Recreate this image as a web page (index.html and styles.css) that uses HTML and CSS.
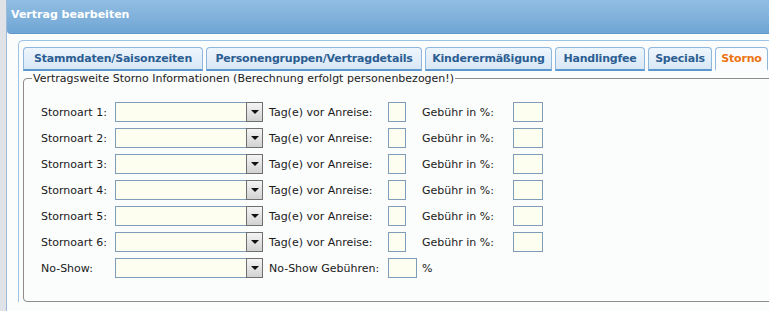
FILE: index.html
```html
<!DOCTYPE html>
<html lang="de">
<head>
    <meta charset="UTF-8">
    <meta name="viewport" content="width=device-width, initial-scale=1.0">
    <title>Vertrag bearbeiten</title>
    <link rel="stylesheet" href="styles.css">
</head>
<body>
    <div class="fenster">
        <div class="kopf">Vertrag bearbeiten</div>

        <div class="inhalt">
            <div class="panel">
                <ul class="reiter">
                    <li class="r-stamm">Stammdaten/Saisonzeiten</li>
                    <li class="r-pers">Personengruppen/Vertragdetails</li>
                    <li class="r-kind">Kinderermäßigung</li>
                    <li class="r-hand">Handlingfee</li>
                    <li class="r-spec">Specials</li>
                    <li class="r-storno aktiv">Storno</li>
                </ul>

                <fieldset class="storno">
                    <legend>Vertragsweite Storno Informationen (Berechnung erfolgt personenbezogen!)</legend>

                    <div class="zeilen">
                        <div class="zeile">
                            <label class="lbl">Stornoart 1:</label>
                            <div class="auswahl"><span class="pfeil"></span></div>
                            <span class="tage">Tag(e) vor Anreise:</span>
                            <input class="feld klein" type="text">
                            <span class="gebuehr">Gebühr in %:</span>
                            <input class="feld mittel" type="text">
                        </div>
                        <div class="zeile">
                            <label class="lbl">Stornoart 2:</label>
                            <div class="auswahl"><span class="pfeil"></span></div>
                            <span class="tage">Tag(e) vor Anreise:</span>
                            <input class="feld klein" type="text">
                            <span class="gebuehr">Gebühr in %:</span>
                            <input class="feld mittel" type="text">
                        </div>
                        <div class="zeile">
                            <label class="lbl">Stornoart 3:</label>
                            <div class="auswahl"><span class="pfeil"></span></div>
                            <span class="tage">Tag(e) vor Anreise:</span>
                            <input class="feld klein" type="text">
                            <span class="gebuehr">Gebühr in %:</span>
                            <input class="feld mittel" type="text">
                        </div>
                        <div class="zeile">
                            <label class="lbl">Stornoart 4:</label>
                            <div class="auswahl"><span class="pfeil"></span></div>
                            <span class="tage">Tag(e) vor Anreise:</span>
                            <input class="feld klein" type="text">
                            <span class="gebuehr">Gebühr in %:</span>
                            <input class="feld mittel" type="text">
                        </div>
                        <div class="zeile">
                            <label class="lbl">Stornoart 5:</label>
                            <div class="auswahl"><span class="pfeil"></span></div>
                            <span class="tage">Tag(e) vor Anreise:</span>
                            <input class="feld klein" type="text">
                            <span class="gebuehr">Gebühr in %:</span>
                            <input class="feld mittel" type="text">
                        </div>
                        <div class="zeile">
                            <label class="lbl">Stornoart 6:</label>
                            <div class="auswahl"><span class="pfeil"></span></div>
                            <span class="tage">Tag(e) vor Anreise:</span>
                            <input class="feld klein" type="text">
                            <span class="gebuehr">Gebühr in %:</span>
                            <input class="feld mittel" type="text">
                        </div>
                        <div class="zeile">
                            <label class="lbl">No-Show:</label>
                            <div class="auswahl"><span class="pfeil"></span></div>
                            <span class="tage">No-Show Gebühren:</span>
                            <input class="feld breit" type="text">
                            <span class="prozent">%</span>
                        </div>
                    </div>
                </fieldset>
            </div>
        </div>
    </div>
</body>
</html>
```

FILE: styles.css
```css
* {
    margin: 0;
    padding: 0;
    box-sizing: border-box;
}
html, body {
    height: 100%;
    overflow: hidden;
}
body {
    background-color: #dfe3e8;
    font-family: "DejaVu Sans", Verdana, sans-serif;
    font-size: 11px;
    color: #1a1a1a;
    padding-left: 6px;
}
/* Fenster */
.fenster {
    width: 840px;
    height: 100%;
    background-color: #fbfcfc;
    border-left: 1px solid #9dbbd8;
}
.kopf {
    height: 34px;
    padding: 8px 0 0 4px;
    background: linear-gradient(#90bde2, #80b1db 55%, #6ea5d5);
    border-bottom: 1px solid #5f98cb;
    border-bottom-left-radius: 4px;
    color: #ffffff;
    font-weight: bold;
    font-size: 11px;
}
.inhalt {
    padding: 6px 0 0 11px;
}
.panel {
    border-top: 1px solid #9cc2e4;
    border-left: 1px solid #9cc2e4;
    border-top-left-radius: 5px;
    padding: 6px 0 0 4px;
}
/* Reiter */
.reiter {
    list-style: none;
    display: flex;
    gap: 3px;
}
.reiter li {
    height: 24px;
    padding-top: 4px;
    border: 1px solid #8fb6dc;
    border-bottom: 2px solid #5c97cd;
    border-radius: 4px 4px 0 0;
    background: linear-gradient(#eef5fc, #d9e8f6);
    color: #2c5e93;
    font-weight: bold;
    letter-spacing: -0.2px;
    text-align: center;
    white-space: nowrap;
}
.r-stamm { width: 180px; }
.r-pers { width: 216px; }
.r-kind { width: 127px; }
.r-hand { width: 90px; }
.r-spec { width: 64px; }
.r-storno { width: 53px; }
.reiter li.aktiv {
    background: #fbfcfd;
    border-bottom-color: #fbfcfd;
    color: #ec7413;
}
/* Storno */
.storno {
    margin: 1px 0 0 0;
    border: 1px solid #8c8c8c;
    border-radius: 4px;
    padding: 0;
    height: 230px;
}
.storno legend {
    margin-left: 8px;
    padding: 0 1px;
    color: #222222;
}
.zeilen {
    padding: 14px 0 10px 17px;
}
.zeile {
    display: flex;
    align-items: center;
    height: 26px;
}
.lbl {
    width: 74px;
}
.auswahl {
    position: relative;
    width: 148px;
    height: 20px;
    border: 1px solid #7f9db9;
    background-color: #fdfdf0;
}
.pfeil {
    position: absolute;
    right: -1px;
    top: -1px;
    width: 17px;
    height: 20px;
    border: 1px solid #6f6f6f;
    background: linear-gradient(#f4f4f4, #d2d2d2);
}
.pfeil::after {
    content: "";
    position: absolute;
    left: 4px;
    top: 7px;
    border-left: 4px solid transparent;
    border-right: 4px solid transparent;
    border-top: 4px solid #111111;
}
.tage {
    margin-left: 6px;
    width: 119px;
}
.gebuehr {
    margin-left: 16px;
    width: 91px;
}
.prozent {
    margin-left: 5px;
}
.feld {
    height: 20px;
    border: 1px solid #7f9db9;
    background-color: #fdfdf0;
}
.feld.klein {
    width: 18px;
}
.feld.mittel {
    width: 30px;
}
.feld.breit {
    width: 29px;
}
```
